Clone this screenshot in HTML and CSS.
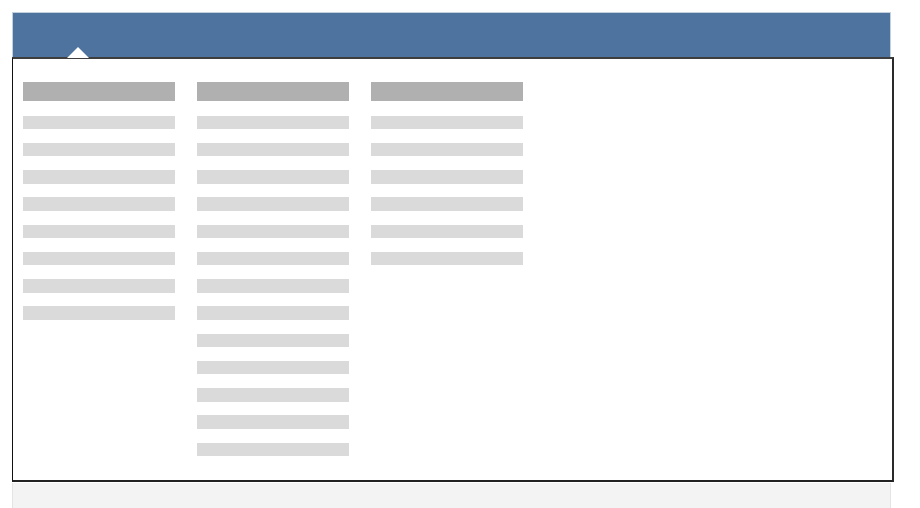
FILE: index.html
```html
<!DOCTYPE html>
<html lang="en">
<head>
  <meta charset="UTF-8" />
  <title>Mega Menu</title>
  <link rel="stylesheet" href="styles.css">
</head>
<body>
  <div class="page">
    <!-- Top nav bar -->
    <div class="nav-bar"></div>

    <!-- Dropdown panel with three link columns -->
    <div class="menu-panel">
      <span class="menu-arrow"></span>
      <div class="menu-columns">
        <div class="menu-col">
          <div class="col-title"></div>
          <div class="col-link"></div>
          <div class="col-link"></div>
          <div class="col-link"></div>
          <div class="col-link"></div>
          <div class="col-link"></div>
          <div class="col-link"></div>
          <div class="col-link"></div>
          <div class="col-link"></div>
        </div>
        <div class="menu-col">
          <div class="col-title"></div>
          <div class="col-link"></div>
          <div class="col-link"></div>
          <div class="col-link"></div>
          <div class="col-link"></div>
          <div class="col-link"></div>
          <div class="col-link"></div>
          <div class="col-link"></div>
          <div class="col-link"></div>
          <div class="col-link"></div>
          <div class="col-link"></div>
          <div class="col-link"></div>
          <div class="col-link"></div>
          <div class="col-link"></div>
        </div>
        <div class="menu-col">
          <div class="col-title"></div>
          <div class="col-link"></div>
          <div class="col-link"></div>
          <div class="col-link"></div>
          <div class="col-link"></div>
          <div class="col-link"></div>
          <div class="col-link"></div>
        </div>
      </div>
    </div>

    <!-- Page content below the menu -->
    <div class="content-strip"></div>
  </div>
</body>
</html>
```

FILE: styles.css
```css
* { margin: 0; padding: 0; box-sizing: border-box; }

body, html {
  height: 100%;
  background: #ffffff;
  font-family: 'Liberation Sans', Arial, sans-serif;
  overflow: hidden;
}

.page {
  width: 882px;
  margin: 12px 0 0 12px;
}

.nav-bar {
  width: 879px;
  height: 45px;
  background: #4d739e;
  border: 1px solid #c3d0de;
  border-bottom: none;
}

.menu-panel {
  position: relative;
  height: 425px;
  border: 1px solid #111111;
  border-top: 2px solid #3e3e3e;
  border-right: 2px solid #2a2a2a;
  border-bottom: 2px solid #222222;
  padding: 23px 10px 0 10px;
  background: #ffffff;
}

/* little notch pointing up at the active nav item */
.menu-arrow {
  position: absolute;
  top: -12px;
  left: 54px;
  width: 0;
  height: 0;
  border-left: 11px solid transparent;
  border-right: 11px solid transparent;
  border-bottom: 11px solid #ffffff;
}

.menu-columns {
  display: flex;
  gap: 22px;
}

.menu-col {
  width: 152px;
  display: flex;
  flex-direction: column;
}

.col-title {
  height: 19px;
  background: #b0b0b0;
  margin-bottom: 14.5px;
}

.col-link {
  height: 13.5px;
  background: #dadada;
  margin-bottom: 13.75px;
}

.content-strip {
  width: 879px;
  height: 40px;
  margin-top: 1px;
  background: #f3f3f3;
  border-left: 1px solid #e4e4e4;
  border-right: 1px solid #e4e4e4;
}
```
